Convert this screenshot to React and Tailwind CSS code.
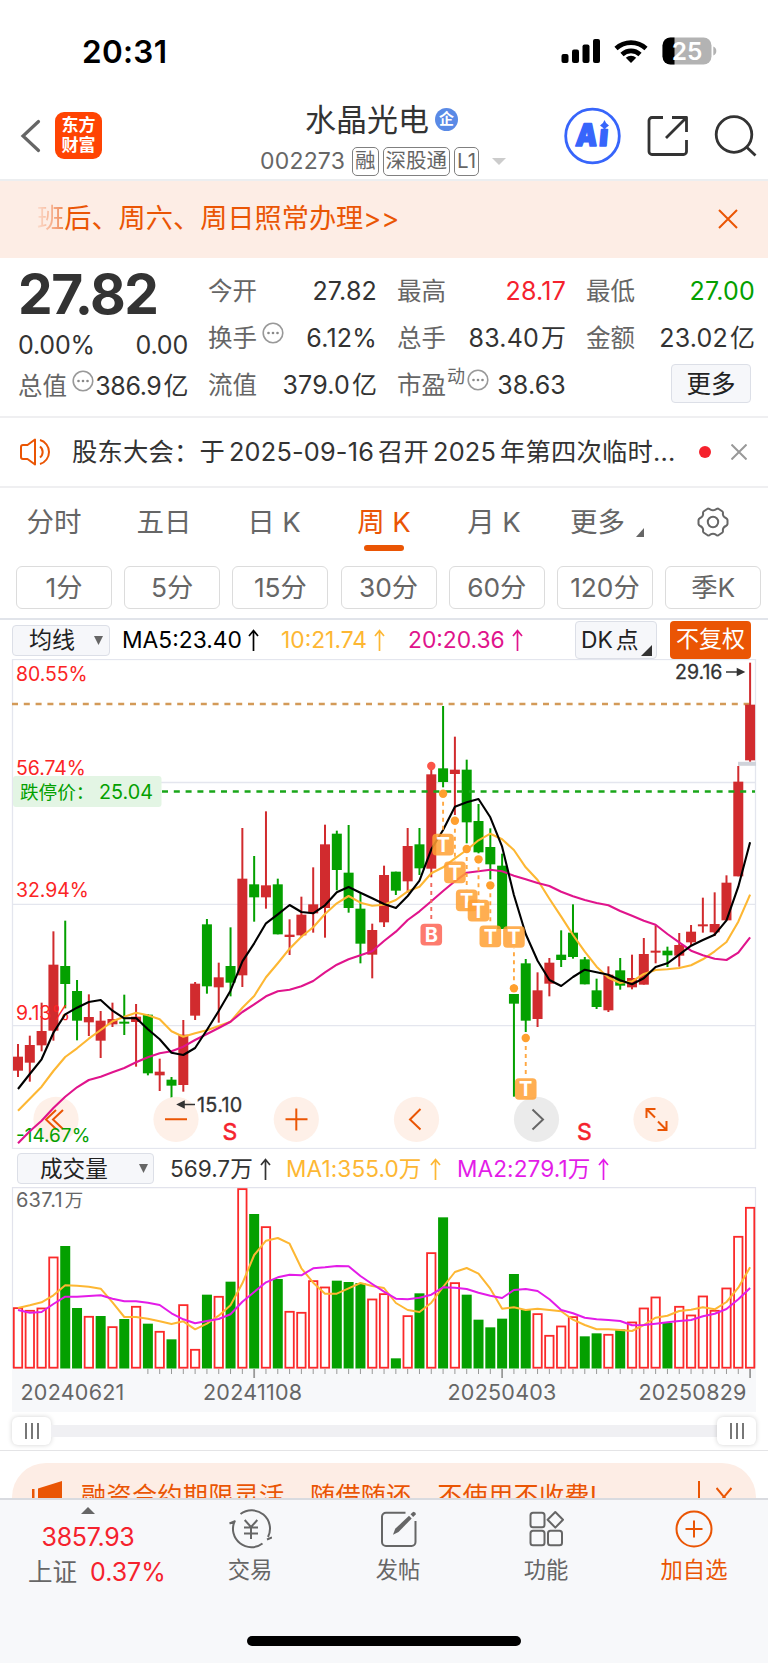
import React from 'react';

const RED = '#d12b2e';
const GREEN = '#04a000';

// [direction, high, body top, body bottom, low], in thirds of a pixel
const candles = [
  ['r', 1182, 1220, 1262, 1281], ['r', 1157, 1185, 1238, 1295], ['r', 1058, 1143, 1186, 1204],
  ['r', 844, 944, 1142, 1172], ['g', 812, 948, 1002, 1075], ['g', 990, 1023, 1112, 1171],
  ['r', 1033, 1101, 1117, 1158], ['r', 1083, 1112, 1172, 1224], ['r', 1058, 1107, 1123, 1131],
  ['g', 1034, 1115, 1121, 1155], ['r', 1062, 1100, 1116, 1250], ['g', 1092, 1094, 1270, 1276],
  ['r', 1226, 1265, 1276, 1323], ['g', 1281, 1289, 1307, 1361], ['r', 1110, 1154, 1305, 1325],
  ['r', 996, 1001, 1097, 1110], ['g', 807, 823, 1009, 1031], ['r', 938, 982, 1012, 1118],
  ['g', 832, 948, 998, 1039], ['r', 534, 686, 976, 1011], ['g', 618, 703, 742, 815],
  ['r', 484, 706, 742, 776], ['g', 686, 703, 853, 853], ['r', 808, 854, 861, 915],
  ['r', 740, 794, 856, 862], ['r', 652, 763, 790, 848], ['r', 524, 583, 774, 863],
  ['g', 542, 551, 660, 721], ['g', 525, 668, 774, 788], ['g', 730, 776, 881, 940],
  ['r', 821, 840, 914, 985], ['r', 647, 675, 817, 831], ['g', 665, 665, 722, 735],
  ['r', 534, 588, 694, 728], ['g', 534, 583, 655, 675], ['r', 338, 373, 656, 682],
  ['g', 168, 355, 396, 412], ['r', 260, 359, 372, 495], ['g', 329, 359, 517, 580],
  ['g', 462, 513, 607, 610], ['g', 535, 591, 643, 688], ['g', 611, 647, 837, 837],
  ['g', 1032, 1032, 1061, 1340], ['g', 927, 940, 1112, 1146], ['r', 967, 1021, 1107, 1131],
  ['r', 924, 938, 1001, 1039], ['g', 841, 914, 930, 951], ['g', 763, 848, 921, 926],
  ['g', 921, 928, 1003, 1003], ['g', 986, 1021, 1071, 1077], ['r', 949, 974, 1081, 1086],
  ['g', 924, 961, 1007, 1019], ['r', 914, 984, 1012, 1018], ['r', 864, 912, 1004, 1004],
  ['r', 826, 902, 908, 940], ['g', 890, 902, 916, 951], ['r', 849, 885, 917, 950],
  ['r', 825, 845, 877, 886], ['r', 743, 823, 829, 848], ['r', 727, 822, 847, 858],
  ['r', 676, 698, 811, 811], ['r', 348, 395, 679, 679], ['r', 38, 164, 331, 335],
];

const ma5 = [1317, 1272, 1228, 1148, 1093, 1073, 1056, 1050, 1082, 1105, 1104, 1138, 1168, 1208, 1215, 1194, 1140, 1083, 1022, 934, 880, 820, 793, 765, 786, 790, 766, 727, 711, 728, 745, 762, 774, 738, 692, 598, 540, 470, 457, 447, 502, 590, 735, 852, 932, 990, 1008, 981, 959, 967, 974, 991, 1003, 985, 951, 940, 914, 887, 870, 854, 811, 710, 577];
const ma10 = [1382, 1346, 1310, 1263, 1221, 1195, 1166, 1140, 1114, 1100, 1088, 1096, 1108, 1144, 1160, 1150, 1141, 1128, 1115, 1073, 1038, 982, 940, 896, 860, 832, 792, 760, 738, 758, 767, 764, 750, 724, 710, 670, 652, 625, 600, 571, 551, 568, 600, 652, 690, 746, 800, 855, 905, 950, 983, 999, 994, 972, 960, 958, 954, 946, 928, 904, 876, 815, 734];
const ma20 = [1480, 1444, 1412, 1374, 1340, 1312, 1290, 1280, 1267, 1254, 1237, 1222, 1210, 1204, 1190, 1170, 1152, 1134, 1115, 1086, 1063, 1039, 1024, 1019, 1009, 993, 967, 944, 928, 916, 904, 873, 845, 810, 784, 754, 723, 694, 668, 664, 659, 664, 677, 688, 699, 708, 725, 739, 750, 759, 766, 783, 797, 812, 824, 852, 877, 902, 916, 926, 930, 908, 862];

const volumes = [472, 480, 473, 320, 288, 474, 498, 498, 529, 507, 468, 521, 543, 568, 463, 597, 434, 438, 395, 115, 192, 229, 387, 483, 486, 391, 410, 392, 396, 399, 446, 430, 625, 496, 430, 307, 202, 397, 434, 509, 532, 506, 372, 480, 490, 555, 527, 499, 559, 550, 552, 538, 515, 473, 440, 519, 468, 494, 437, 480, 413, 258, 171];
const volumeColors = 'rrrrggrgrgrgrgrrgrgrgrgrrrrgggrrgrgrgrggggggrrrrggrgrrrgrrrrrrr';
const vma1 = [474, 466, 457, 436, 406, 407, 410, 416, 457, 501, 501, 506, 514, 522, 514, 538, 521, 497, 466, 400, 315, 272, 264, 281, 355, 398, 431, 431, 415, 399, 408, 414, 459, 480, 486, 458, 411, 366, 354, 371, 416, 476, 472, 480, 476, 480, 484, 509, 525, 538, 538, 540, 543, 525, 503, 497, 483, 479, 472, 478, 456, 413, 352];
const vma2 = [480, 488, 486, 462, 440, 440, 438, 436, 446, 454, 454, 458, 465, 490, 508, 520, 513, 507, 493, 455, 426, 397, 382, 374, 376, 355, 352, 348, 349, 378, 402, 425, 446, 448, 443, 434, 412, 413, 417, 428, 437, 444, 420, 417, 423, 448, 480, 490, 503, 508, 510, 513, 526, 525, 521, 517, 513, 510, 499, 491, 477, 448, 414];

// [candle index, dot y, badge y]
const tMarks = [
  [36, 431, 584], [37, 512, 667], [38, 597, 751], [39, 628, 782],
  [40, 706, 859], [42, 1015, 861], [43, 1164, 1317],
];

const cx = (i) => 18 + i * 11.808;
const py = (v) => 650 + v / 3;
const vy = (v) => 1150 + v / 3;
const line = (values, y) => values.map((v, i) => `${cx(i).toFixed(1)},${y(v).toFixed(1)}`).join(' ');

function StatusBar() {
  return (
    <div className="h-[92px] pt-[33px] pl-[82px] pr-[51px] flex justify-between items-start">
      <span className="text-[31.5px] leading-[37px] font-semibold text-black tracking-[0.3px]">20:31</span>
      <svg className="mt-[3px]" width="156" height="30" viewBox="561 36 156 30">
        <rect x="561.5" y="54" width="7" height="9" rx="2" />
        <rect x="572" y="49.5" width="7" height="13.5" rx="2" />
        <rect x="582.5" y="44.5" width="7" height="18.5" rx="2" />
        <rect x="593" y="39" width="7" height="24" rx="2" />
        <g fill="none" stroke="#000" strokeWidth="4.6">
          <path d="M616 48.5a22 22 0 0 1 30 0" />
          <path d="M622 54.5a13 13 0 0 1 18 0" />
        </g>
        <path d="M631 63l-5.200-5.200a7.500 7.500 0 0 1 10.400 0z" />
        <clipPath id="battery"><rect x="662.5" y="37.5" width="49" height="27" rx="8" /></clipPath>
        <g clipPath="url(#battery)">
          <rect x="662" y="37" width="50" height="28" fill="#b3b3b3" />
          <rect x="662" y="37" width="12.500" height="28" />
        </g>
        <path d="M713.3 46.5q3 1.200 3 4.500t-3 4.500z" fill="#b3b3b3" />
        <text x="687" y="60" textAnchor="middle" fontSize="24.5" fontWeight="600" fill="#fff">25</text>
      </svg>
    </div>
  );
}

function Tag({ children }) {
  return (
    <span className="h-[29px] px-[2px] border-[1.5px] border-[#808080] rounded-[5px] text-[20.5px] leading-[26px] text-[#666]">
      {children}
    </span>
  );
}

function Header() {
  return (
    <div className="h-[89px] flex border-b-2 border-[#eceef0]">
      <div className="w-[240px] pl-[20px] pt-[20px] flex">
        <svg className="mt-[7px]" width="22" height="34" viewBox="0 0 22 34" fill="none" stroke="#666" strokeWidth="3.2" strokeLinecap="round">
          <path d="M18.500 2.500 3 17l15.500 14.500" />
        </svg>
        <div className="ml-[13px] w-[47px] h-[47px] rounded-[9px] bg-[#ff4403] text-white font-bold text-[17px] leading-[20px] text-center pt-[3px]">
          东方<br />财富
        </div>
      </div>
      <div className="w-[290px] flex flex-col">
        <div className="h-[54px] pt-[9px] pl-[65px] flex">
          <span className="text-[31px] leading-[37px] text-[#333]">水晶光电</span>
          <span className="ml-[6px] mt-[7px] w-[23px] h-[23px] rounded-full bg-[#5a8ae6] text-white text-[15px] leading-[22px] font-bold text-center">企</span>
        </div>
        <div className="flex items-center gap-[4px] pl-[20px] pt-[1px]">
          <span className="w-[88px] text-[23px] leading-[29px] text-[#666] tracking-[0.2px]">002273</span>
          <Tag>融</Tag>
          <Tag>深股通</Tag>
          <Tag>L1</Tag>
          <svg className="ml-[9px]" width="14" height="7"><path d="M0 0h14l-7 7z" fill="#ccc" /></svg>
        </div>
      </div>
      <svg width="238" height="87" viewBox="530 92 238 87" fill="none">
        <circle cx="592.5" cy="136" r="26.8" stroke="#3765fb" strokeWidth="2.8" />
        <g fill="#3765fb" stroke="#3765fb" strokeWidth="1.6" strokeLinejoin="round" fontSize="31" fontWeight="900">
          <text transform="translate(575 146) skewX(-5) scale(0.880 1)">A</text>
          <text transform="translate(598.500 146) skewX(-5)" fontSize="30">ı</text>
        </g>
        <path d="M604.5 120q1.300 4 4.500 5.500-3.200 1.500-4.500 5.500-1.300-4-4.500-5.500 3.200-1.500 4.500-5.500z" fill="#3765fb" />
        <g stroke="#333" strokeWidth="2.8" strokeLinejoin="round">
          <path d="M663 117.500h-11a3 3 0 0 0-3 3v31a3 3 0 0 0 3 3h31.500a3 3 0 0 0 3-3v-11.500" />
          <path d="M672 117.500h14.500v14.500M686.500 117.500 666 138" />
          <circle cx="734" cy="134.500" r="17.800" />
          <path d="M746.500 147l9 8.500" />
        </g>
      </svg>
    </div>
  );
}

function Notice() {
  return (
    <div className="h-[77px] bg-[#fdede5] flex items-center justify-between pl-[37px] pr-[30px] pb-[2px]">
      <span className="text-[27.2px] leading-[40px] text-[#ea5504] whitespace-nowrap">
        <span className="bg-gradient-to-r from-[#fbdccd] to-[#ef8a57] bg-clip-text text-transparent">班</span>
        后、周六、周日照常办理&gt;&gt;
      </span>
      <svg width="20" height="20" viewBox="0 0 20 20" stroke="#ea5504" strokeWidth="2"><path d="M1 1l18 18M19 1L1 19" /></svg>
    </div>
  );
}

function More() {
  return (
    <svg className="-mt-[11px] shrink-0" width="22" height="22" viewBox="0 0 22 22">
      <circle cx="11" cy="11" r="9.8" fill="none" stroke="#999" strokeWidth="1.6" />
      <g fill="#888"><circle cx="6.5" cy="11" r="1.3" /><circle cx="11" cy="11" r="1.3" /><circle cx="15.5" cy="11" r="1.3" /></g>
    </svg>
  );
}

function Stat({ label, more, value, unit, color = 'text-[#333]' }) {
  return (
    <div className="h-[47px] flex items-center justify-between">
      <span className="flex items-center gap-[5px] text-[24.5px] leading-[47px] text-[#666]">{label}{more && <More />}</span>
      <span className={`text-[25px] leading-[47px] tracking-[0.2px] ${color}`}>
        {value}{unit && <span className="ml-[2px] tracking-normal">{unit}</span>}
      </span>
    </div>
  );
}

function Quote() {
  return (
    <div className="h-[160px] flex gap-[20px] pl-[18px] pr-[13px] pt-[10px] border-b-2 border-[#efeff1] whitespace-nowrap">
      <div className="w-[170px]">
        <div className="h-[54px] text-[55px] leading-[53px] font-bold text-[#333] tracking-[-1.5px]">27.82</div>
        <div className="h-[44px] flex justify-between text-[25px] leading-[46px] text-[#333] tracking-[-0.2px]">
          <span>0.00%</span>
          <span>0.00</span>
        </div>
        <div className="h-[47px] -mt-[4px] flex items-center justify-between pt-[1px]">
          <span className="flex items-center gap-[5px] text-[24.5px] leading-[47px] text-[#666]">总值<More /></span>
          <span className="text-[25px] leading-[47px] text-[#333] tracking-[-0.4px]">386.9<span className="ml-[2px]">亿</span></span>
        </div>
      </div>
      <div className="w-[169px]">
        <Stat label="今开" value="27.82" />
        <Stat label="换手" more value="6.12%" />
        <Stat label="流值" value="379.0" unit="亿" />
      </div>
      <div className="w-[169px]">
        <Stat label="最高" value="28.17" color="text-[#f5222d]" />
        <Stat label="总手" value="83.40" unit="万" />
        <div className="h-[47px] flex items-center justify-between">
          <span className="flex items-center text-[24.5px] leading-[47px] text-[#666]">
            市盈<span className="text-[18px] leading-[20px] -mt-[17px] ml-[1px] mr-[2px]">动</span><More />
          </span>
          <span className="text-[25px] leading-[47px] text-[#333] tracking-[0.2px]">38.63</span>
        </div>
      </div>
      <div className="w-[169px]">
        <Stat label="最低" value="27.00" color="text-[#04a000]" />
        <Stat label="金额" value="23.02" unit="亿" />
        <div className="h-[47px] flex items-center justify-end pr-[4px]">
          <button className="w-[80px] h-[39px] -mt-[4px] bg-[#f6f7fa] border border-[#dcdfe7] rounded-[4px] text-[24.5px] leading-[36px] text-[#222]">更多</button>
        </div>
      </div>
    </div>
  );
}

function News() {
  return (
    <div className="h-[70px] flex items-center pl-[20px] pr-[20px] border-b-2 border-[#efeff1]">
      <svg width="34" height="28" viewBox="0 0 34 28" fill="none" stroke="#ea5504" strokeWidth="2">
        <path d="M15 1.500v25L7.500 21H3a2 2 0 0 1-2-2V9a2 2 0 0 1 2-2h4.500z" strokeLinejoin="round" />
        <path d="M20 8.500a7 7 0 0 1 0 11M20 2a12.500 12.500 0 0 1 0 24" />
      </svg>
      <span className="ml-[18px] w-[603px] text-[25.3px] leading-[36px] tracking-[0.2px] text-[#333] whitespace-nowrap">
        股东大会：于<span className="mx-[4px]">2025-09-16</span>召开<span className="mx-[4px]">2025</span>年第四次临时...
      </span>
      <span className="ml-[24px] w-[12px] h-[12px] rounded-full bg-[#f5222d]" />
      <svg className="ml-[20px]" width="16" height="16" viewBox="0 0 16 16" stroke="#999" strokeWidth="2"><path d="M0.500 0.500l15 15M15.500 0.500l-15 15" /></svg>
    </div>
  );
}

function Periods() {
  const tabs = ['分时', '五日', '日 K', '周 K', '月 K'];
  const minutes = ['1分', '5分', '15分', '30分', '60分', '120分', '季K'];
  return (
    <div className="h-[132px] border-b-2 border-[#e1e4ea]">
      <div className="h-[78px] flex pt-[15px] -ml-[1px] text-[27.5px] leading-[38px] text-[#666] whitespace-nowrap">
        {tabs.map((tab) => (
          <div key={tab} className={tab === '周 K' ? 'w-[110px] text-center text-[#ea5504]' : 'w-[110px] text-center'}>
            {tab}
            {tab === '周 K' && <div className="mx-auto mt-[4px] w-[40px] h-[6px] rounded-full bg-[#ea5504]" />}
          </div>
        ))}
        <div className="w-[111px] pl-[21px] flex">
          更多
          <svg className="ml-[11px] mt-[25px]" width="8" height="9"><path d="M8 0v9H0z" fill="#666" /></svg>
        </div>
        <svg className="ml-[37px] mt-[3px]" width="32" height="32" viewBox="0 0 32 32" fill="none" stroke="#666" strokeWidth="2">
          <path d="M11 2.500q1.500 0 2.500 1.200 2.500 1.300 5 0 1-1.200 2.500-1.200l4.500 3q.8 1 .3 2.500.3 2.800 3 4 1.500.8 1.700 2v4q-.2 1.200-1.700 2-2.700 1.200-3 4 .5 1.500-.3 2.500l-4.500 3q-1.500 0-2.500-1.200-2.500-1.300-5 0-1 1.200-2.500 1.200l-4.500-3q-.8-1-.3-2.500-.3-2.800-3-4-1.500-.8-1.700-2v-4q.2-1.200 1.700-2 2.700-1.200 3-4-.5-1.500.3-2.500z" strokeLinejoin="round" />
          <circle cx="16" cy="16" r="5.2" />
        </svg>
      </div>
      <div className="flex gap-[12.2px] pl-[16px]">
        {minutes.map((m) => (
          <button key={m} className="w-[96px] h-[43px] border-[1.5px] border-[#dcdcdc] rounded-[6px] text-[26.3px] leading-[39px] text-[#666] whitespace-nowrap">{m}</button>
        ))}
      </div>
    </div>
  );
}

function UpArrow() {
  return (
    <svg className="inline-block shrink-0" width="11" height="22" viewBox="0 0 11 22" fill="none" stroke="currentColor" strokeWidth="1.7">
      <path d="M5.500 22V1.500M1 7l4.500-5.500L10 7" />
    </svg>
  );
}

function Caret() {
  return <svg width="9" height="9"><path d="M0 0h9L4.500 9z" fill="#666" /></svg>;
}

function PriceLegend() {
  return (
    <div className="h-[39px] flex items-center pl-[12px] pt-[1px] text-[22.8px] leading-[36px] whitespace-nowrap">
      <div className="w-[98px] h-[31px] bg-[#f6f7fa] border border-[#dcdfe7] rounded-[4px] flex items-center justify-between pl-[16px] pr-[6px] text-[#222] text-[23px] leading-[28px]">
        均线 <Caret />
      </div>
      <div className="w-[159px] pl-[12px] flex items-center gap-[6px] text-black">MA5:23.40<UpArrow /></div>
      <div className="w-[127px] pl-[12px] flex items-center gap-[7px] text-[#fdb733]">10:21.74<UpArrow /></div>
      <div className="w-[179px] pl-[12px] flex items-center gap-[7px] text-[#e0148c]">20:20.36<UpArrow /></div>
      <div className="w-[82px] h-[38px] bg-[#f6f7fa] border border-[#dcdfe7] rounded-[4px] flex items-center pl-[5px] text-[#222]">
        DK<span className="ml-[3px]">点</span>
        <svg className="mt-[20px] ml-[2px]" width="11" height="11"><path d="M11 0v11H0z" fill="#333" /></svg>
      </div>
      <div className="ml-[13px] w-[81px] h-[38px] bg-[#ea5504] rounded-[4px] text-center text-white text-[23px]">不复权</div>
    </div>
  );
}

function Mark({ x, y, letter, color }) {
  return (
    <g>
      <rect x={x - 10.8} y={y - 10.8} width="21.6" height="21.6" rx="4" fill={color} fillOpacity="0.85" />
      <text x={x} y={y + 7.3} textAnchor="middle" fontSize="20" fontWeight="700" fill="#fff">{letter}</text>
    </g>
  );
}

function PriceChart() {
  return (
    <svg className="block" width="768" height="490" viewBox="0 659 768 490">
      <g fill="none" stroke="#e4e6ee" strokeWidth="1.3">
        <rect x="12.5" y="659.5" width="743" height="489" />
        <path d="M13 782.500h742M13 904.300h742M13 1025.700h742" />
      </g>
      <path d="M738 763.800h18" stroke="#d0d3da" strokeWidth="4" />
      <path d="M12 704H755" stroke="#d39a58" strokeWidth="2.4" strokeDasharray="6 5.8" />
      {candles.map(([dir, high, top, bottom, low], i) => (
        <g key={i} fill={dir === 'r' ? RED : GREEN}>
          <rect x={cx(i) - 1} y={py(high)} width="2" height={(low - high) / 3} />
          <rect x={cx(i) - 5} y={py(top)} width="10" height={Math.max((bottom - top) / 3, 2)} />
        </g>
      ))}
      <path d="M162 791.500H755" stroke="#1aa61a" strokeWidth="2.4" strokeDasharray="6 5.8" />
      <rect x="13" y="776" width="148.5" height="31" rx="3" fill="#e3f5e4" />
      <text x="20" y="798.5" fontSize="18.6" fill="#04a000">跌停价：<tspan x="99" fontSize="19.8">25.04</tspan></text>
      <g fontSize="19.4" fill="#fb2424">
        <text x="16" y="681">80.55%</text>
        <text x="16" y="775">56.74%</text>
        <text x="16" y="897">32.94%</text>
        <text x="16" y="1019.5">9.13%</text>
      </g>

      {/* zoom and scroll controls */}
      {[56, 176, 296.3, 416.5, 656].map((x) => <circle key={x} cx={x} cy="1119.3" r="22.6" fill="#fef0e8" />)}
      <circle cx="536.5" cy="1119.3" r="22.6" fill="#ebebeb" />
      <g fill="none" stroke="#ea5504" strokeWidth="2">
        <path d="M56 1110l-10 9.500 10 9.500M63 1110l-10 9.500 10 9.500" />
        <path d="M165 1119.300h22M285.500 1119.300h22M296.300 1108.500v22M420.500 1109l-10.500 10.500 10.500 10" />
        <path d="M646.500 1118v-9h9M647 1109.500l8 8M657.500 1130h9v-9M666 1129.500l-8-8" />
      </g>
      <path d="M532.500 1109.500l10.500 10-10.500 10" fill="none" stroke="#666" strokeWidth="2" />
      <g fontSize="23" fill="#f5222d" textAnchor="middle" strokeWidth="0.5" stroke="#f5222d">
        <text x="230" y="1139.500">S</text>
        <text x="584.5" y="1139.500">S</text>
      </g>
      <text x="16" y="1141.500" fontSize="19" fill="#04a000">-14.67%</text>

      <g fill="none" strokeWidth="2.100" strokeLinejoin="round">
        <polyline points={line(ma10, py)} stroke="#fdb733" />
        <polyline points={line(ma20, py)} stroke="#e0148c" />
        <polyline points={line(ma5, py)} stroke="#000" />
      </g>

      {tMarks.map(([i, dot, badge]) => (
        <g key={i}>
          <path d={`M${cx(i)} ${py(dot)}V${py(badge) + (badge > dot ? -11 : 11)}`} stroke="#ff9f2e" strokeWidth="1.9" strokeDasharray="4 4" opacity="0.9" />
          <circle cx={cx(i)} cy={py(dot)} r="4.2" fill="#ff9f2e" />
          <Mark x={cx(i)} y={py(badge)} letter="T" color="#ffa033" />
        </g>
      ))}
      <circle cx={cx(35)} cy={py(348)} r="4.2" fill="#fb5548" />
      <path d={`M${cx(35)} 883V922`} stroke="#f06a60" strokeWidth="1.9" strokeDasharray="4 4" />
      <Mark x={cx(35)} y={py(854)} letter="B" color="#fd6455" />

      <g fill="#333" stroke="#333" strokeWidth="0.3" fontSize="19.8">
        <text x="197" y="1112" letterSpacing="0.3">15.10</text>
        <text x="675" y="679" fontSize="19.5">29.16</text>
      </g>
      <g fill="#333" stroke="#333" strokeWidth="1.6">
        <path d="M181 1104.500h14M178 1104.500l6-3v6z" />
        <path d="M726 672h15M743.500 672l-6-3v6z" />
      </g>
    </svg>
  );
}

function VolumeLegend() {
  return (
    <div className="h-[38px] flex items-center pl-[17px] pt-[1px] text-[22.6px] leading-[34px] whitespace-nowrap">
      <div className="w-[137px] h-[31px] bg-[#f6f7fa] border border-[#dcdfe7] rounded-[4px] flex items-center justify-between pl-[22px] pr-[5px] text-[#222] leading-[28px]">
        成交量 <Caret />
      </div>
      <div className="w-[117px] pl-[16px] flex items-center gap-[7px] text-[#333]">569.7万<UpArrow /></div>
      <div className="w-[171px] pl-[15px] flex items-center gap-[8px] text-[#fdb733] tracking-[0.1px]">MA1:355.0万<UpArrow /></div>
      <div className="pl-[15px] flex items-center gap-[8px] text-[#e31ce8] tracking-[0.1px]">MA2:279.1万<UpArrow /></div>
    </div>
  );
}

function VolumeChart() {
  const major = [20, 41, 62];
  return (
    <svg className="block" width="768" height="225" viewBox="0 1187 768 225">
      <rect x="12" y="1368" width="744" height="44" fill="#f7f8fa" />
      <path d="M12.500 1368V1187.600H755.500V1368" fill="none" stroke="#e2e3ec" strokeWidth="1.2" />
      <text x="16" y="1207" fontSize="20" letterSpacing="0.2" fill="#666">637.1<tspan dx="2" fontSize="18.5">万</tspan></text>
      {volumes.map((v, i) => {
        const h = 1368.5 - vy(v);
        return volumeColors[i] === 'g'
          ? <rect key={i} x={cx(i) - 5} y={vy(v)} width="10" height={h} fill={GREEN} />
          : <rect key={i} x={cx(i) - 4.2} y={vy(v) + 0.8} width="8.4" height={h - 1.6} fill="#fff" stroke="#fb2a2a" strokeWidth="1.8" />;
      })}
      {candles.map((_, i) => i > 10 && (
        <path key={i} d={`M${cx(i)} 1369v${major.includes(i) ? 9 : 5}`} stroke="#999" strokeWidth={major.includes(i) ? 1.8 : 1} />
      ))}
      <g fill="none" strokeWidth="2" strokeLinejoin="round">
        <polyline points={line(vma1, vy)} stroke="#fdb733" />
        <polyline points={line(vma2, vy)} stroke="#e31ce8" />
      </g>
      <g fontSize="21.5" letterSpacing="0.25" fill="#666">
        <text x="20.5" y="1399.500">20240621</text>
        <text x="203" y="1399.500">20241108</text>
        <text x="447.5" y="1399.500">20250403</text>
        <text x="638.5" y="1399.500">20250829</text>
      </g>
    </svg>
  );
}

function Handle() {
  return (
    <div className="w-[39px] h-[28px] rounded-[6px] bg-white shadow-[0_0_5px_rgba(0,0,0,0.18)] flex items-center justify-center gap-[4px]">
      <span className="w-[2px] h-[16px] bg-[#777]" />
      <span className="w-[2px] h-[16px] bg-[#777]" />
      <span className="w-[2px] h-[16px] bg-[#777]" />
    </div>
  );
}

function RangeSlider() {
  return (
    <div className="h-[39px] px-[12px] flex items-center border-b border-[#e4e4e6]">
      <Handle />
      <div className="flex-1 h-[12px] bg-[#f0f0f3]" />
      <Handle />
    </div>
  );
}

function Promo() {
  return (
    <div className="h-[47px] px-[12px] pt-[12px] overflow-hidden">
      <div className="h-[72px] rounded-[34px] bg-[#fdede5] flex items-start text-[#ea5504] whitespace-nowrap">
        <svg className="ml-[19px] mt-[17px]" width="32" height="34" viewBox="0 0 32 34" fill="#ea5504">
          <path d="M1 9h2.500v14H1zM7 8.500 31 1v29L7 23z" />
        </svg>
        <span className="ml-[18px] mt-[16px] w-[617px] text-[25.2px] leading-[34px] tracking-[0.25px]">融资合约期限灵活，随借随还，不使用不收费!</span>
        <span className="mt-[18px] w-[1.5px] h-[32px] bg-[#ea5504]" />
        <svg className="ml-[16px] mt-[24px]" width="16" height="20" viewBox="0 0 16 20" stroke="#ea5504" strokeWidth="2"><path d="M0.500 1l15 18M15.500 1l-15 18" /></svg>
      </div>
    </div>
  );
}

function NavItem({ label, color = 'text-[#666]', children }) {
  return (
    <div className={`w-[148px] pt-[9px] flex flex-col items-center ${color}`}>
      <svg width="44" height="42" viewBox="0 0 44 42" fill="none" stroke="currentColor" strokeWidth="2">{children}</svg>
      <span className="mt-[3px] text-[22.3px] leading-[32px]">{label}</span>
    </div>
  );
}

function BottomNav() {
  return (
    <div className="h-[165px] bg-[#f7f8fa] border-t-2 border-[#d9dbe0]">
      <div className="h-[136px] flex">
        <div className="w-[176px] flex flex-col items-center whitespace-nowrap">
          <svg className="mt-[7px]" width="14" height="7"><path d="M7 0l7 7H0z" fill="#666" /></svg>
          <span className="mt-[6px] text-[25px] leading-[34px] tracking-[-0.3px] text-[#f5222d]">3857.93</span>
          <span className="self-start pl-[28px] text-[24.5px] leading-[36px] text-[#666]">
            上证<span className="ml-[13px] text-[25px] text-[#f5222d]">0.37%</span>
          </span>
        </div>
        <NavItem label="交易">
          <path d="M12.500 5A18.400 18.400 0 0 1 40 28M39 30.500l5-2M34.500 34.500A18.400 18.400 0 0 1 6.500 12.500M1.500 14.500l6-2.500" />
          <path d="M16.700 11l6.300 7 6.300-7M23 18v12M16 18.500h14M16 24.500h14" />
        </NavItem>
        <NavItem label="发帖">
          <path d="M29.500 3.700H10a4 4 0 0 0-4 4V33a4 4 0 0 0 4 4h25.500a4 4 0 0 0 4-4V12" />
          <path d="M17 25.800l2.200-6L33 6.800l2.700 2.700L22.500 23z" fill="currentColor" stroke="none" />
          <path d="M34.500 5.300l2.800-2.600q2.500.3 2.700 2.600l-2.800 2.800z" fill="currentColor" stroke="none" />
        </NavItem>
        <NavItem label="功能">
          <rect x="6.5" y="3.7" width="14" height="14.5" rx="2.5" />
          <rect x="6.5" y="21.7" width="14" height="14.5" rx="2.5" />
          <rect x="24" y="21.7" width="14" height="14.5" rx="2.5" />
          <path d="M31.300 3l7.700 7.800-7.700 7.800-7.700-7.800z" strokeLinejoin="round" />
        </NavItem>
        <NavItem label="加自选" color="text-[#ea5504]">
          <circle cx="22" cy="20" r="17.5" />
          <path d="M22 11.500v17M13.500 20h17" />
        </NavItem>
      </div>
      <div className="mx-auto w-[274px] h-[10px] rounded-full bg-black" />
    </div>
  );
}

export default function App() {
  return (
    <div className='w-[768px] h-[1663px] bg-white overflow-hidden [font-family:Inter,"Noto_Sans_CJK_SC",sans-serif]'>
      <StatusBar />
      <Header />
      <Notice />
      <Quote />
      <News />
      <Periods />
      <PriceLegend />
      <PriceChart />
      <VolumeLegend />
      <VolumeChart />
      <RangeSlider />
      <Promo />
      <BottomNav />
    </div>
  );
}
